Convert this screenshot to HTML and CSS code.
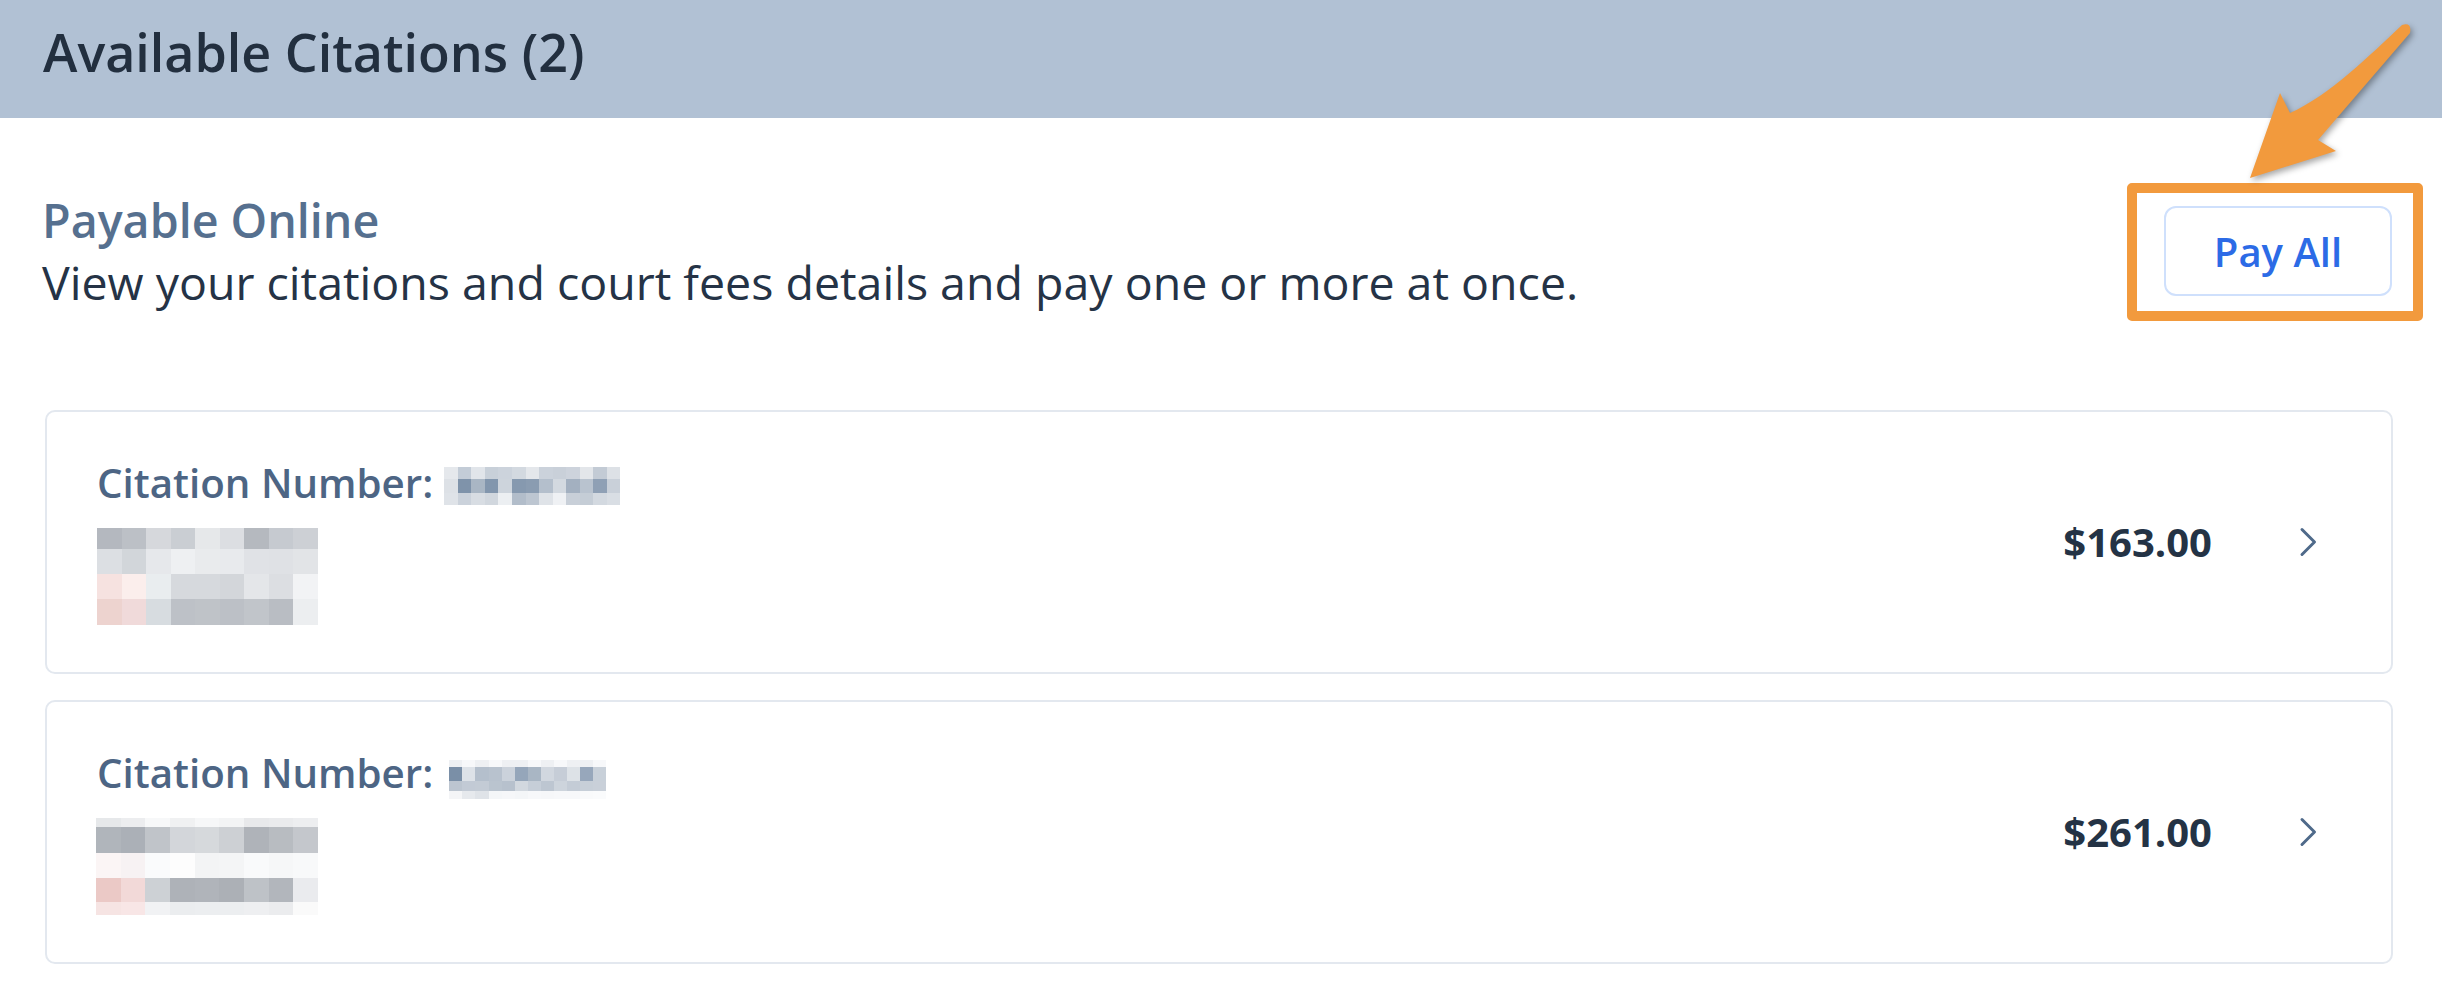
FILE: index.html
```html
<!DOCTYPE html>
<html lang="en">
<head>
<meta charset="utf-8">
<title>Available Citations</title>
<link rel="stylesheet" href="styles.css">
</head>
<body>
<div class="page">
  <header class="header">
    <h1 class="title">Available Citations (2)</h1>
  </header>

  <section class="intro">
    <div class="intro-text">
      <h2 class="subtitle">Payable Online</h2>
      <p class="desc">View your citations and court fees details and pay one or more at once.</p>
    </div>
    <div class="pay-wrap">
      <button class="pay-btn" type="button">Pay All</button>
      <span class="highlight-box"></span>
    </div>
  </section>

  <section class="cards">
    <a class="card" href="#">
      <div class="card-left">
        <div class="label-row">
          <span class="label">Citation Number:</span>
          <span class="mosaic m-num1">
            <i style="background:#e5e8ec"></i><i style="background:#c3ccd7"></i><i style="background:#e1e5ea"></i><i style="background:#c8d0d9"></i><i style="background:#ccd3dc"></i><i style="background:#d3d9e0"></i><i style="background:#e4e7eb"></i><i style="background:#cbd2db"></i><i style="background:#c9d0d9"></i><i style="background:#cdd3dc"></i><i style="background:#e3e6ea"></i><i style="background:#c3cbd5"></i><i style="background:#dde1e6"></i>
            <i style="background:#dde1e6"></i><i style="background:#7f93aa"></i><i style="background:#a9b6c4"></i><i style="background:#8296ad"></i><i style="background:#cdd4dc"></i><i style="background:#8699af"></i><i style="background:#8a9cb1"></i><i style="background:#b4bfcc"></i><i style="background:#d3d9e0"></i><i style="background:#a3b0c0"></i><i style="background:#b9c3cf"></i><i style="background:#8fa0b5"></i><i style="background:#c9d0d9"></i>
            <i style="background:#dfe3e8"></i><i style="background:#cbd2db"></i><i style="background:#d8dde3"></i><i style="background:#d1d7de"></i><i style="background:#eceff2"></i><i style="background:#b2bdca"></i><i style="background:#bdc6d1"></i><i style="background:#dfe3e8"></i><i style="background:#eff1f4"></i><i style="background:#c8cfd8"></i><i style="background:#c5cdd6"></i><i style="background:#d3d9e0"></i><i style="background:#d9dee4"></i>
          </span>
        </div>
        <span class="mosaic m-info1">
          <i style="background:#b4b8bf"></i><i style="background:#bcc0c6"></i><i style="background:#d6d8dc"></i><i style="background:#caced3"></i><i style="background:#e6e8ea"></i><i style="background:#dcdee2"></i><i style="background:#b5b9bf"></i><i style="background:#c6cad0"></i><i style="background:#cdd0d5"></i>
          <i style="background:#dcdfe3"></i><i style="background:#d2d6da"></i><i style="background:#e6e8eb"></i><i style="background:#eef0f2"></i><i style="background:#e9ebed"></i><i style="background:#e8eaed"></i><i style="background:#e0e2e6"></i><i style="background:#dfe1e5"></i><i style="background:#e2e4e7"></i>
          <i style="background:#f6e2e0"></i><i style="background:#fbeeec"></i><i style="background:#e9edef"></i><i style="background:#d6d9dd"></i><i style="background:#d6d9dd"></i><i style="background:#d3d6da"></i><i style="background:#e4e6e9"></i><i style="background:#dcdee2"></i><i style="background:#f2f3f5"></i>
          <i style="background:#edd3cf"></i><i style="background:#f0dada"></i><i style="background:#d7dce0"></i><i style="background:#bdc1c7"></i><i style="background:#bfc3c8"></i><i style="background:#bcc0c6"></i><i style="background:#c1c5ca"></i><i style="background:#b9bdc3"></i><i style="background:#eceef0"></i>
        </span>
      </div>
      <div class="card-right">
        <span class="amount">$163.00</span>
        <svg class="chevron" viewBox="0 0 20 30" width="20" height="30" aria-hidden="true">
          <path d="M4 2.5 L16.5 15 L4 27.5" fill="none" stroke="#4f6a8a" stroke-width="3" stroke-linecap="round" stroke-linejoin="round"/>
        </svg>
      </div>
    </a>

    <a class="card" href="#">
      <div class="card-left">
        <div class="label-row">
          <span class="label">Citation Number:</span>
          <span class="mosaic m-num2">
            <i style="background:#eef0f3"></i><i style="background:#f7f8fa"></i><i style="background:#eef0f3"></i><i style="background:#f7f8fa"></i><i style="background:#eef0f3"></i><i style="background:#eef0f3"></i><i style="background:#f7f8fa"></i><i style="background:#eef0f3"></i><i style="background:#f7f8fa"></i><i style="background:#eef0f3"></i><i style="background:#eef0f3"></i><i style="background:#f7f8fa"></i>
            <i style="background:#7a8fa7"></i><i style="background:#dde2e8"></i><i style="background:#b4bfcc"></i><i style="background:#b8c2ce"></i><i style="background:#cbd2db"></i><i style="background:#95a6ba"></i><i style="background:#a9b6c4"></i><i style="background:#d1d7df"></i><i style="background:#c6cdd7"></i><i style="background:#dde2e7"></i><i style="background:#97a7bb"></i><i style="background:#c8d0d9"></i>
            <i style="background:#bcc5d0"></i><i style="background:#c2cad5"></i><i style="background:#c3cbd5"></i><i style="background:#bac4cf"></i><i style="background:#b7c1cd"></i><i style="background:#d2d8df"></i><i style="background:#c6ced8"></i><i style="background:#bdc6d1"></i><i style="background:#cdd4dc"></i><i style="background:#c4ccd6"></i><i style="background:#c7cfd8"></i><i style="background:#c9d0d9"></i>
            <i style="background:#f4f5f7"></i><i style="background:#e6e9ed"></i><i style="background:#dfe3e8"></i><i style="background:#f4f6f8"></i><i style="background:#f6f7f9"></i><i style="background:#f4f6f8"></i><i style="background:#f7f8fa"></i><i style="background:#f6f7f9"></i><i style="background:#f7f8fa"></i><i style="background:#f7f8fa"></i><i style="background:#f9fafb"></i><i style="background:#fafbfc"></i>
          </span>
        </div>
        <span class="mosaic m-info2">
          <i style="background:#e6e8ea"></i><i style="background:#ecedef"></i><i style="background:#f7f8f9"></i><i style="background:#f0f1f2"></i><i style="background:#f6f7f8"></i><i style="background:#f3f4f5"></i><i style="background:#e8e9eb"></i><i style="background:#eaebed"></i><i style="background:#edeef0"></i>
          <i style="background:#b0b5bb"></i><i style="background:#abb0b7"></i><i style="background:#c0c4c9"></i><i style="background:#d3d6da"></i><i style="background:#d6d9dc"></i><i style="background:#cdd0d4"></i><i style="background:#afb3b9"></i><i style="background:#b8bcc1"></i><i style="background:#c4c7cc"></i>
          <i style="background:#fbf5f5"></i><i style="background:#f7f2f3"></i><i style="background:#fafbfc"></i><i style="background:#fdfdfd"></i><i style="background:#f3f4f5"></i><i style="background:#f4f5f6"></i><i style="background:#f9fafb"></i><i style="background:#f6f7f8"></i><i style="background:#f8f9fa"></i>
          <i style="background:#ebc9c6"></i><i style="background:#f2d9d8"></i><i style="background:#cdd1d5"></i><i style="background:#aeb2b8"></i><i style="background:#b0b4ba"></i><i style="background:#acb0b6"></i><i style="background:#bec2c7"></i><i style="background:#b2b6bc"></i><i style="background:#eaebee"></i>
          <i style="background:#f6e4e3"></i><i style="background:#f8e6e6"></i><i style="background:#f1f2f4"></i><i style="background:#ebedef"></i><i style="background:#eceef0"></i><i style="background:#eceef0"></i><i style="background:#eeeff1"></i><i style="background:#ebecee"></i><i style="background:#fafafa"></i>
        </span>
      </div>
      <div class="card-right">
        <span class="amount">$261.00</span>
        <svg class="chevron" viewBox="0 0 20 30" width="20" height="30" aria-hidden="true">
          <path d="M4 2.5 L16.5 15 L4 27.5" fill="none" stroke="#4f6a8a" stroke-width="3" stroke-linecap="round" stroke-linejoin="round"/>
        </svg>
      </div>
    </a>
  </section>

  <svg class="arrow" viewBox="0 0 190 170" width="190" height="170" aria-hidden="true">
    <path d="M172 5 C140 35 100 75 60 93 L50 73 L20 158 L106 131 L88 120 L180 13 Q182 2 172 5 Z" fill="#f29a3d"/>
  </svg>
</div>
</body>
</html>
```

FILE: styles.css
```css
html, body {
  margin: 0;
  padding: 0;
  background: #ffffff;
  overflow: hidden;
}

body {
  font-family: "Open Sans", "Noto Sans", "Liberation Sans", sans-serif;
  color: #253346;
}

.page {
  position: relative;
  width: 2442px;
  height: 984px;
}

.header {
  box-sizing: border-box;
  height: 118px;
  background: #b1c1d4;
  padding: 16px 43px 0;
}

.title {
  margin: 0;
  font-size: 52px;
  line-height: 71px;
  font-weight: 600;
  color: #222f3f;
}

.intro {
  display: flex;
  justify-content: space-between;
  align-items: center;
  padding: 71px 50px 0 42px;
}

.subtitle {
  margin: 0;
  font-size: 46.6px;
  line-height: 62px;
  font-weight: 600;
  color: #56708f;
}

.desc {
  margin: 0;
  font-size: 46.5px;
  line-height: 62px;
  font-weight: 400;
  color: #253346;
}

.pay-wrap {
  position: relative;
  display: flex;
}

.pay-btn {
  box-sizing: border-box;
  width: 228px;
  height: 90px;
  background: #ffffff;
  border: 2px solid #cfe0fc;
  border-radius: 12px;
  font-family: inherit;
  font-size: 40px;
  font-weight: 600;
  color: #2c6be6;
  padding: 0;
  cursor: pointer;
}

.highlight-box {
  position: absolute;
  left: -37px;
  top: -23px;
  right: -31px;
  bottom: -25px;
  border: 10px solid #f29a3d;
  border-radius: 5px;
  pointer-events: none;
}

.cards {
  display: flex;
  flex-direction: column;
  gap: 26px;
  padding: 97px 49px 0 45px;
}

.card {
  box-sizing: border-box;
  height: 264px;
  display: flex;
  justify-content: space-between;
  align-items: center;
  border: 2px solid #e3e8ef;
  border-radius: 10px;
  padding: 0 73px 0 50px;
  text-decoration: none;
  color: inherit;
}

.card-left {
  display: flex;
  flex-direction: column;
  gap: 18px;
  padding: 44px 0 47px;
  box-sizing: border-box;
  height: 100%;
}

.label-row {
  display: flex;
  align-items: flex-start;
  height: 54px;
}

.label {
  font-size: 40.3px;
  line-height: 54px;
  font-weight: 600;
  color: #4d6584;
}

.mosaic {
  display: grid;
}

.mosaic i {
  display: block;
}

.m-num1 {
  width: 176px;
  grid-template-columns: repeat(13, 1fr);
  grid-template-rows: 12px 14px 12px;
  margin: 11px 0 0 11px;
}

.m-num2 {
  width: 157px;
  grid-template-columns: repeat(12, 1fr);
  grid-template-rows: 7px 14px 10px 8px;
  margin: 14px 0 0 16px;
}

.m-info1 {
  width: 221px;
  height: 97px;
  grid-template-columns: repeat(9, 1fr);
  grid-template-rows: 21px 25px 25px 26px;
}

.m-info2 {
  width: 222px;
  height: 97px;
  overflow: hidden;
  grid-template-columns: repeat(9, 1fr);
  grid-template-rows: 9px 26px 25px 24px 13px;
  margin-left: -1px;
}

.card-right {
  display: flex;
  align-items: center;
  gap: 86px;
}

.amount {
  font-size: 40px;
  line-height: 54px;
  font-weight: 700;
  color: #243345;
}

.chevron {
  display: block;
}

.arrow {
  position: absolute;
  left: 2230px;
  top: 20px;
  filter: drop-shadow(2px 3px 3px rgba(0, 0, 0, 0.35));
  pointer-events: none;
}
```
